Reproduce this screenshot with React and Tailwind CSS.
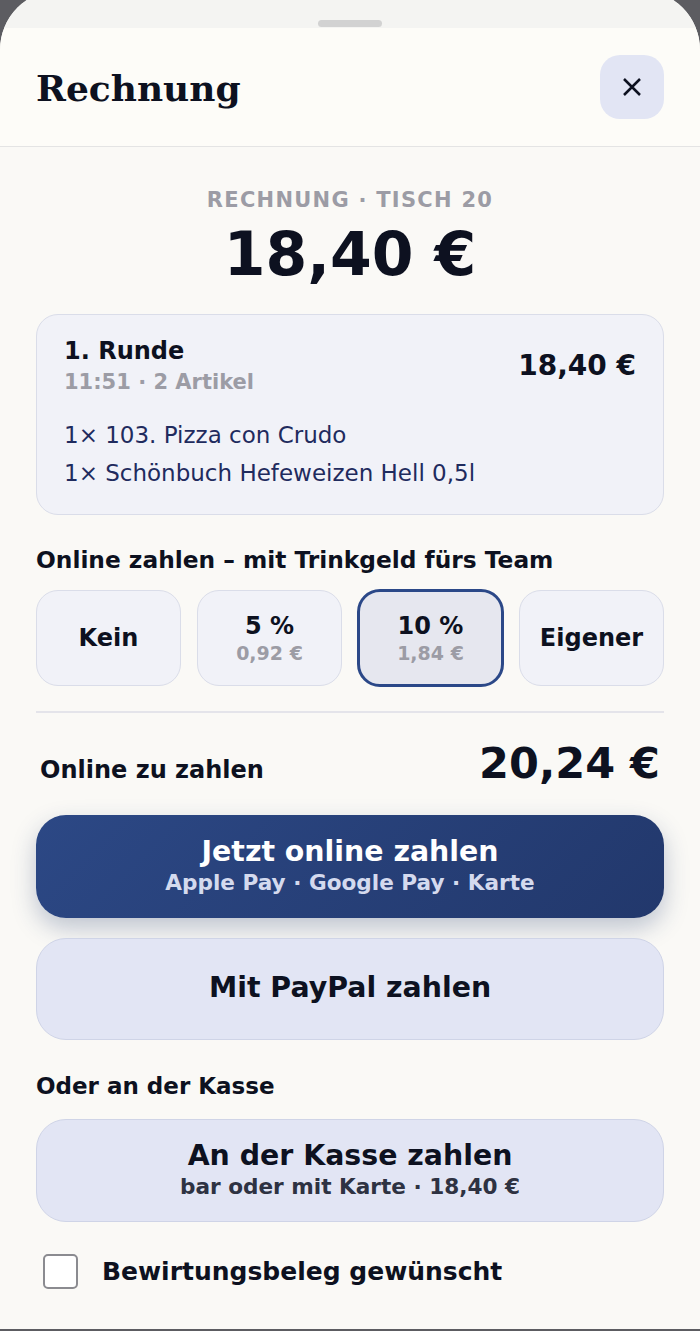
import { useState } from "react";

const tips = [
  { id: "none", label: "Kein" },
  { id: "5", label: "5 %", amount: "0,92 €" },
  { id: "10", label: "10 %", amount: "1,84 €" },
  { id: "custom", label: "Eigener" },
];

const items = ["1× 103. Pizza con Crudo", "1× Schönbuch Hefeweizen Hell 0,5l"];

function CloseIcon() {
  return (
    <svg width="20" height="20" viewBox="0 0 20 20" fill="none" stroke="#0d1120" strokeWidth="2.5">
      <path d="M2 2L18 18M18 2L2 18" />
    </svg>
  );
}

export default function App() {
  const [tip, setTip] = useState("10");
  const [receipt, setReceipt] = useState(false);

  return (
    <div className="relative h-[1331px] overflow-hidden bg-[#5c5c61] font-['DejaVu_Sans',sans-serif]">
      {/* dimmed page behind the sheet */}
      <div className="mx-[30px] h-[120px] bg-[#20202b]" />

      <div className="absolute inset-x-0 bottom-[2px] top-[-10px] flex flex-col overflow-hidden rounded-t-[60px] bg-[#faf9f6] text-[#0d1120]">
        <div className="flex h-[38px] shrink-0 justify-center bg-[#f4f4f2] pt-[30px]">
          <div className="h-[7px] w-[64px] rounded-full bg-[#d2d2d2]" />
        </div>

        <div className="flex h-[119px] shrink-0 items-center justify-between border-b-[1.5px] border-[#e4e4e4] bg-[#fdfcf8] px-9">
          <h1 className="mt-[2px] font-['DejaVu_Serif',serif] text-[36px] font-bold leading-none">Rechnung</h1>
          <button className="flex h-[64px] w-[64px] items-center justify-center rounded-[20px] bg-[#e2e5f4]">
            <CloseIcon />
          </button>
        </div>

        <div className="flex flex-col px-9 pt-[41px]">
          <div className="text-center">
            <div className="text-[21px] font-bold leading-[25px] tracking-[0.06em] text-[#9c9ca5]">
              RECHNUNG · TISCH 20
            </div>
            <div className="mt-[11px] text-[60px] font-bold leading-[60px]">18,40 €</div>
          </div>

          <div className="mt-[30px] rounded-[22px] border-[1.5px] border-[#dadde9] bg-[#f1f2f8] px-[27px] pb-[22px] pt-[21px]">
            <div className="flex items-center justify-between">
              <div>
                <div className="text-[24px] font-bold leading-[30px]">1. Runde</div>
                <div className="mt-[3px] text-[21px] font-bold leading-[26px] text-[#9c9ca5]">11:51 · 2 Artikel</div>
              </div>
              <div className="text-[28px] font-bold">18,40 €</div>
            </div>
            <div className="mt-[21px] text-[23px] leading-[38px] text-[#1f2b5e]">
              {items.map((item) => (
                <div key={item}>{item}</div>
              ))}
            </div>
          </div>

          <div className="mt-[30px] text-[23.3px] font-bold leading-[30px]">Online zahlen – mit Trinkgeld fürs Team</div>

          <div className="mt-[15px] grid grid-cols-4 gap-4">
            {tips.map((t) => {
              const active = t.id === tip;
              return (
                <button
                  key={t.id}
                  onClick={() => setTip(t.id)}
                  className={
                    active
                      ? "-m-[1px] flex h-[98px] flex-col items-center justify-center rounded-[23px] border-[3px] border-[#2b4888] bg-[#e6e7ef]"
                      : "flex h-[96px] flex-col items-center justify-center rounded-[22px] border-[1.5px] border-[#dadde9] bg-[#f1f2f8]"
                  }
                >
                  <span className="text-[24px] font-bold leading-[30px]">{t.label}</span>
                  {t.amount && (
                    <span className="text-[19px] font-bold leading-[24px] text-[#9c9ca5]">{t.amount}</span>
                  )}
                </button>
              );
            })}
          </div>

          <div className="mt-[25px] h-[1.5px] bg-[#e4e4ea]" />

          <div className="mt-[29px] flex items-baseline justify-between px-1">
            <span className="text-[24px] font-bold">Online zu zahlen</span>
            <span className="text-[43px] font-bold leading-[43px]">20,24 €</span>
          </div>

          <button className="mt-[27px] flex h-[103px] flex-col items-center justify-center rounded-[30px] bg-[linear-gradient(135deg,#2c4885,#22386c)] text-white shadow-[0_10px_24px_rgba(34,56,108,0.28)]">
            <span className="text-[28.4px] font-bold leading-[34px]">Jetzt online zahlen</span>
            <span className="text-[21.6px] font-bold leading-[28px] text-[#d4daee]">Apple Pay · Google Pay · Karte</span>
          </button>

          <button className="mt-[20px] flex h-[102px] items-center justify-center rounded-[30px] border-[1.5px] border-[#cfd4e7] bg-[#e2e5f4] text-[28.4px] font-bold">
            Mit PayPal zahlen
          </button>

          <div className="mt-[31px] text-[23px] font-bold leading-[30px]">Oder an der Kasse</div>

          <button className="mt-[18px] flex h-[103px] flex-col items-center justify-center rounded-[30px] border-[1.5px] border-[#cfd4e7] bg-[#e2e5f4]">
            <span className="text-[28.4px] font-bold leading-[34px]">An der Kasse zahlen</span>
            <span className="text-[21.6px] font-bold leading-[28px] text-[#2e3242]">bar oder mit Karte · 18,40 €</span>
          </button>

          <label className="mt-[31px] flex cursor-pointer items-center gap-6 pl-[7px]">
            <input
              type="checkbox"
              checked={receipt}
              onChange={(e) => setReceipt(e.target.checked)}
              className="h-[35px] w-[35px] appearance-none rounded-[5px] border-2 border-[#8b8b90] bg-white checked:bg-[#2b4888]"
            />
            <span className="text-[25px] font-bold">Bewirtungsbeleg gewünscht</span>
          </label>
        </div>
      </div>
    </div>
  );
}
